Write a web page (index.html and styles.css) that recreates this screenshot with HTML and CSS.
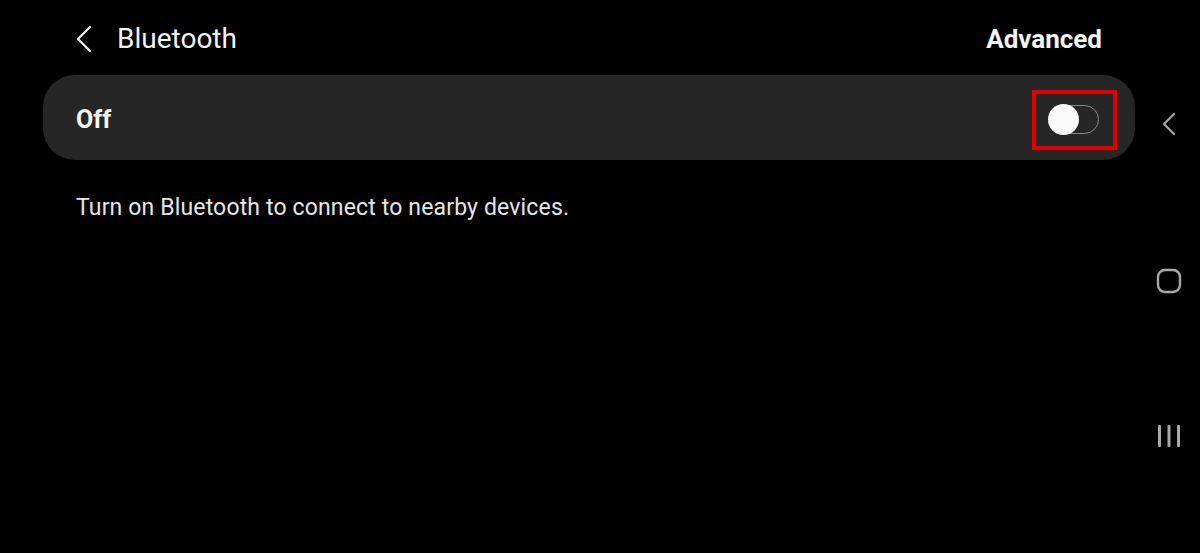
FILE: index.html
```html
<!DOCTYPE html>
<html lang="en">
<head>
<meta charset="utf-8">
<title>Bluetooth</title>
<link rel="stylesheet" href="styles.css">
</head>
<body>
<div class="screen">
  <main class="main">
    <header class="header">
      <div class="header-left">
        <svg class="back" width="16" height="28" viewBox="0 0 16 28"><path d="M14 2 L2 14 L14 26" fill="none" stroke="#f2f2f2" stroke-width="2.2" stroke-linecap="round" stroke-linejoin="round"/></svg>
        <h1 class="title">Bluetooth</h1>
      </div>
      <div class="advanced">Advanced</div>
    </header>
    <section class="card">
      <span class="card-label">Off</span>
      <div class="highlight">
        <div class="toggle"><div class="knob"></div></div>
      </div>
    </section>
    <p class="desc">Turn on Bluetooth to connect to nearby devices.</p>
  </main>
  <nav class="nav">
    <svg class="nav-back" width="14" height="24" viewBox="0 0 14 24"><path d="M12 2 L2 12 L12 22" fill="none" stroke="#a8a8a8" stroke-width="2.2" stroke-linecap="round" stroke-linejoin="round"/></svg>
    <svg class="nav-home" width="26" height="26" viewBox="0 0 26 26"><rect x="2" y="2" width="22" height="22" rx="7" fill="none" stroke="#a8a8a8" stroke-width="2.4"/></svg>
    <svg class="nav-recent" width="24" height="22" viewBox="0 0 24 22"><g fill="#a8a8a8"><rect x="1" y="0" width="3" height="22" rx="1"/><rect x="10.5" y="0" width="3" height="22" rx="1"/><rect x="20" y="0" width="3" height="22" rx="1"/></g></svg>
  </nav>
</div>
</body>
</html>
```

FILE: styles.css
```css
html, body {
  margin: 0;
  padding: 0;
  background: #000;
}

.screen {
  width: 1200px;
  height: 553px;
  display: flex;
  background: #000;
  font-family: Roboto, "Noto Sans", "Liberation Sans", sans-serif;
  color: #f5f5f5;
  overflow: hidden;
}

.main {
  width: 1092px;
  margin-left: 43px;
  display: flex;
  flex-direction: column;
}

.header {
  height: 75px;
  display: flex;
  align-items: center;
  justify-content: space-between;
  padding: 0 33px 0 33px;
  box-sizing: border-box;
}

.header-left {
  display: flex;
  align-items: center;
}

.back {
  display: block;
  margin-top: 2px;
}

.title {
  margin: 0 0 0 25px;
  font-size: 28px;
  font-weight: 400;
  line-height: 30px;
  color: #f5f5f5;
  padding-top: 3px;
}

.advanced {
  font-size: 26px;
  font-weight: 700;
  line-height: 30px;
  padding-top: 3px;
  color: #f5f5f5;
}

.card {
  height: 85px;
  background: #262626;
  border-radius: 32px;
  display: flex;
  align-items: center;
  justify-content: space-between;
  padding: 0 18px 0 33px;
  box-sizing: border-box;
}

.card-label {
  font-size: 25px;
  font-weight: 700;
  color: #f5f5f5;
  padding-top: 3px;
}

.highlight {
  width: 85px;
  height: 60px;
  border: 4px solid #e10000;
  box-sizing: border-box;
  display: flex;
  align-items: center;
  justify-content: center;
  margin-top: 4px;
}

.toggle {
  position: relative;
  width: 49px;
  height: 29px;
  border: 1.5px solid #8a8a8a;
  border-radius: 15px;
  box-sizing: border-box;
  background: #262626;
}

.knob {
  position: absolute;
  left: -3px;
  top: -2.5px;
  width: 31px;
  height: 31px;
  border-radius: 50%;
  background: #fafafa;
}

.desc {
  margin: 35px 0 0 33px;
  font-size: 23px;
  letter-spacing: 0.15px;
  line-height: 26px;
  color: #e6e6e6;
}

.nav {
  flex: 1;
  position: relative;
  display: flex;
  flex-direction: column;
  align-items: center;
  padding-left: 3px;
}

.nav-back {
  margin-top: 112px;
}

.nav-home {
  margin-top: 132px;
}

.nav-recent {
  margin-top: 131px;
}
```
